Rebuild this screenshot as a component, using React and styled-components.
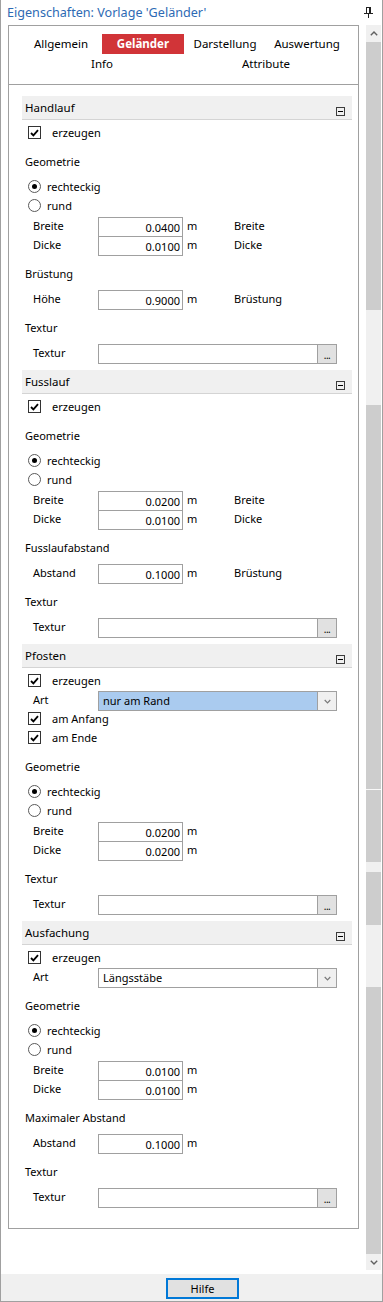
import React from 'react';
import styled, { createGlobalStyle } from 'styled-components';

const GlobalStyle = createGlobalStyle`
  html, body {
    margin: 0;
    padding: 0;
    background: #ffffff;
  }
  body {
    font-family: 'Noto Sans', 'Open Sans', sans-serif;
    font-size: 11px;
    color: #000000;
  }
  * {
    box-sizing: border-box;
  }
`;

const Window = styled.div`
  width: 383px;
  height: 1302px;
  border: 1px solid #a0a0a0;
  border-top: none;
  display: flex;
  flex-direction: column;
  background: #ffffff;
`;

const TitleBar = styled.div`
  height: 25px;
  display: flex;
  align-items: center;
  justify-content: space-between;
  padding: 0 9px 0 6px;
`;

const Title = styled.div`
  color: #2d6ab4;
  font-size: 12.6px;
  line-height: 25px;
`;

const Body = styled.div`
  height: 1249px;
  display: flex;
`;

const Content = styled.div`
  width: 365px;
  padding: 0 7px;
  overflow: hidden;
`;

const Panel = styled.div`
  border: 1px solid #a0a0a0;
`;

const TabsBar = styled.div`
  padding: 8px 10px 10px 11px;
  border-bottom: 1px solid #a0a0a0;
`;

const TabRow = styled.div`
  display: grid;
  grid-template-columns: repeat(${(p) => p.$cols}, 1fr);
  height: 20px;
`;

const Tab = styled.div`
  display: flex;
  align-items: center;
  justify-content: center;
  padding-bottom: 1px;
  background: ${(p) => (p.$active ? '#d13438' : 'transparent')};
  color: ${(p) => (p.$active ? '#ffffff' : '#000000')};
  font-weight: ${(p) => (p.$active ? 700 : 400)};
  font-size: 11.5px;
`;

const Sections = styled.div`
  padding: 11px 6px 22px 13px;
`;

const Section = styled.div`
  & + & {
    margin-top: 8px;
  }
`;

const SectionHeader = styled.div`
  height: 24px;
  background: #f0f0f0;
  border-bottom: 1px solid #d4d4d4;
  display: flex;
  justify-content: space-between;
  align-items: center;
  padding: 0 7px 0 3px;
  font-size: 11.5px;
`;

const CollapseBox = styled.span`
  width: 9px;
  height: 9px;
  border: 1px solid #3c3c3c;
  align-self: flex-end;
  margin-bottom: 3px;
  display: flex;
  align-items: center;
  justify-content: center;
  &::after {
    content: '';
    width: 5px;
    height: 1px;
    background: #000;
  }
`;

const SectionBody = styled.div`
  padding-top: 3px;
`;

const Row = styled.div`
  height: 19px;
  display: flex;
  align-items: center;
  padding-left: ${(p) => p.$indent}px;
  white-space: nowrap;
`;

const GroupLabel = styled(Row)`
  margin-top: 10px;
  margin-bottom: 6px;
`;

const RadioGroup = styled.div`
  margin-bottom: 1px;
`;

const CheckBox = styled.span`
  width: 13px;
  height: 13px;
  border: 1px solid #333333;
  background: #ffffff;
  display: inline-flex;
  align-items: center;
  justify-content: center;
  margin-right: 11px;
  flex-shrink: 0;
`;

const RadioDot = styled.span`
  width: 13px;
  height: 13px;
  border: 1px solid #5a5a5a;
  border-radius: 50%;
  background: #ffffff;
  display: inline-flex;
  align-items: center;
  justify-content: center;
  margin-right: 6px;
  &::after {
    content: '';
    width: 5px;
    height: 5px;
    border-radius: 50%;
    background: ${(p) => (p.$checked ? '#000000' : 'transparent')};
  }
`;

const FieldLabel = styled.span`
  width: 65px;
  flex-shrink: 0;
`;

const ValueBox = styled.div`
  width: 85px;
  height: 20px;
  align-self: flex-start;
  margin-top: 1px;
  border: 1px solid #a0a0a0;
  background: #ffffff;
  display: flex;
  align-items: center;
  justify-content: flex-end;
  padding-right: 2px;
`;

const Unit = styled.span`
  width: 51px;
  padding-left: 4px;
`;

const WideBox = styled.div`
  width: 239px;
  height: 20px;
  align-self: flex-start;
  margin-top: 1px;
  border: 1px solid #a0a0a0;
  background: ${(p) => (p.$selected ? '#aacbef' : '#ffffff')};
  display: flex;
  align-items: stretch;
`;

const WideText = styled.span`
  flex: 1;
  display: flex;
  align-items: center;
  padding-left: 4px;
  padding-bottom: 1px;
`;

const SideButton = styled.span`
  width: 19px;
  border-left: 1px solid #a0a0a0;
  background: ${(p) => (p.$light ? '#f0f0f0' : '#e1e1e1')};
  display: flex;
  align-items: center;
  justify-content: center;
  color: #000;
  font-size: 10px;
  letter-spacing: -0.5px;
  padding-top: ${(p) => (p.$light ? 0 : 2)}px;
`;

const ScrollBar = styled.div`
  width: 15px;
  height: 1245px;
  margin-right: 1px;
  background: #f0f0f0;
  display: flex;
  flex-direction: column;
`;

const ScrollArrow = styled.div`
  height: ${(p) => p.$h}px;
  display: flex;
  align-items: center;
  justify-content: center;
`;

const ScrollPiece = styled.div`
  height: ${(p) => p.$h}px;
  background: ${(p) => (p.$thumb ? '#cdcdcd' : p.$line ? '#f8f8f8' : '#f0f0f0')};
`;

const Footer = styled.div`
  height: 27px;
  background: #f0f0f0;
  display: flex;
  align-items: center;
  padding-left: 165px;
`;

const HelpButton = styled.button`
  width: 73px;
  height: 21px;
  border: 2px solid #0078d7;
  background: #e1e1e1;
  font-family: 'Noto Sans', sans-serif;
  font-size: 11px;
  color: #000;
  padding: 0;
  margin-top: 1px;
`;

const PinIcon = () => (
  <svg width="9" height="11" viewBox="0 0 9 11">
    <rect x="2.5" y="0.5" width="4" height="6" fill="none" stroke="#222" />
    <rect x="5" y="1" width="1" height="5" fill="#222" />
    <line x1="0" y1="6.5" x2="9" y2="6.5" stroke="#222" />
    <line x1="4.5" y1="7" x2="4.5" y2="11" stroke="#222" />
  </svg>
);

const CheckMark = () => (
  <svg width="9" height="8" viewBox="0 0 9 8">
    <polyline points="1,4 3.4,6.4 8,1.2" fill="none" stroke="#000" strokeWidth="1.8" />
  </svg>
);

const Chevron = ({ up, color = '#606060', w = 8 }) => (
  <svg width={w} height="5" viewBox="0 0 8 5">
    <polyline
      points={up ? '0.8,4.2 4,1 7.2,4.2' : '0.8,0.8 4,4 7.2,0.8'}
      fill="none"
      stroke={color}
      strokeWidth="1.4"
    />
  </svg>
);

const tabs = [
  ['Allgemein', 'Geländer', 'Darstellung', 'Auswertung'],
  ['Info', 'Attribute'],
];

const texture = { label: 'Textur', texture: true };

const sections = [
  {
    title: 'Handlauf',
    groups: [
      {
        label: 'Geometrie',
        radios: true,
        fields: [
          ['Breite', '0.0400', 'Breite'],
          ['Dicke', '0.0100', 'Dicke'],
        ],
      },
      { label: 'Brüstung', fields: [['Höhe', '0.9000', 'Brüstung']] },
      texture,
    ],
  },
  {
    title: 'Fusslauf',
    groups: [
      {
        label: 'Geometrie',
        radios: true,
        fields: [
          ['Breite', '0.0200', 'Breite'],
          ['Dicke', '0.0100', 'Dicke'],
        ],
      },
      { label: 'Fusslaufabstand', fields: [['Abstand', '0.1000', 'Brüstung']] },
      texture,
    ],
  },
  {
    title: 'Pfosten',
    select: { value: 'nur am Rand', selected: true },
    checks: ['am Anfang', 'am Ende'],
    groups: [
      {
        label: 'Geometrie',
        radios: true,
        fields: [
          ['Breite', '0.0200'],
          ['Dicke', '0.0200'],
        ],
      },
      texture,
    ],
  },
  {
    title: 'Ausfachung',
    select: { value: 'Längsstäbe' },
    groups: [
      {
        label: 'Geometrie',
        radios: true,
        fields: [
          ['Breite', '0.0100'],
          ['Dicke', '0.0100'],
        ],
      },
      { label: 'Maximaler Abstand', fields: [['Abstand', '0.1000']] },
      texture,
    ],
  },
];

// the thumb is drawn in pieces, as it shows in the original
const scrollPieces = [
  { h: 268, thumb: true },
  { h: 95 },
  { h: 384, thumb: true },
  { h: 1, line: true },
  { h: 72, thumb: true },
  { h: 10 },
  { h: 53, thumb: true },
  { h: 62 },
  { h: 267, thumb: true },
];

function CheckRow({ label }) {
  return (
    <Row $indent={6}>
      <CheckBox>
        <CheckMark />
      </CheckBox>
      {label}
    </Row>
  );
}

function Group({ group }) {
  return (
    <>
      <GroupLabel $indent={3}>{group.label}</GroupLabel>
      {group.radios && (
        <RadioGroup>
          <Row $indent={6}>
            <RadioDot $checked />
            rechteckig
          </Row>
          <Row $indent={6}>
            <RadioDot />
            rund
          </Row>
        </RadioGroup>
      )}
      {group.fields &&
        group.fields.map(([label, value, hint]) => (
          <Row $indent={11} key={label}>
            <FieldLabel>{label}</FieldLabel>
            <ValueBox>{value}</ValueBox>
            <Unit>m</Unit>
            {hint && <span>{hint}</span>}
          </Row>
        ))}
      {group.texture && (
        <Row $indent={11}>
          <FieldLabel>Textur</FieldLabel>
          <WideBox>
            <WideText />
            <SideButton>...</SideButton>
          </WideBox>
        </Row>
      )}
    </>
  );
}

export default function App() {
  return (
    <>
      <GlobalStyle />
      <Window>
        <TitleBar>
          <Title>Eigenschaften: Vorlage 'Geländer'</Title>
          <PinIcon />
        </TitleBar>
        <Body>
          <Content>
            <Panel>
              <TabsBar>
                {tabs.map((row) => (
                  <TabRow $cols={row.length} key={row[0]}>
                    {row.map((t) => (
                      <Tab $active={t === 'Geländer'} key={t}>
                        {t}
                      </Tab>
                    ))}
                  </TabRow>
                ))}
              </TabsBar>
              <Sections>
                {sections.map((s) => (
                  <Section key={s.title}>
                    <SectionHeader>
                      <span>{s.title}</span>
                      <CollapseBox />
                    </SectionHeader>
                    <SectionBody>
                      <CheckRow label="erzeugen" />
                      {s.select && (
                        <Row $indent={11}>
                          <FieldLabel>Art</FieldLabel>
                          <WideBox $selected={s.select.selected}>
                            <WideText>{s.select.value}</WideText>
                            <SideButton $light>
                              <Chevron color="#7a7a7a" w={7} />
                            </SideButton>
                          </WideBox>
                        </Row>
                      )}
                      {s.checks && s.checks.map((c) => <CheckRow label={c} key={c} />)}
                      {s.groups.map((g) => (
                        <Group group={g} key={g.label} />
                      ))}
                    </SectionBody>
                  </Section>
                ))}
              </Sections>
            </Panel>
          </Content>
          <ScrollBar>
            <ScrollArrow $h={17}>
              <Chevron up />
            </ScrollArrow>
            {scrollPieces.map((p, i) => (
              <ScrollPiece key={i} $h={p.h} $thumb={p.thumb} $line={p.line} />
            ))}
            <ScrollArrow $h={16}>
              <Chevron />
            </ScrollArrow>
          </ScrollBar>
        </Body>
        <Footer>
          <HelpButton>Hilfe</HelpButton>
        </Footer>
      </Window>
    </>
  );
}
